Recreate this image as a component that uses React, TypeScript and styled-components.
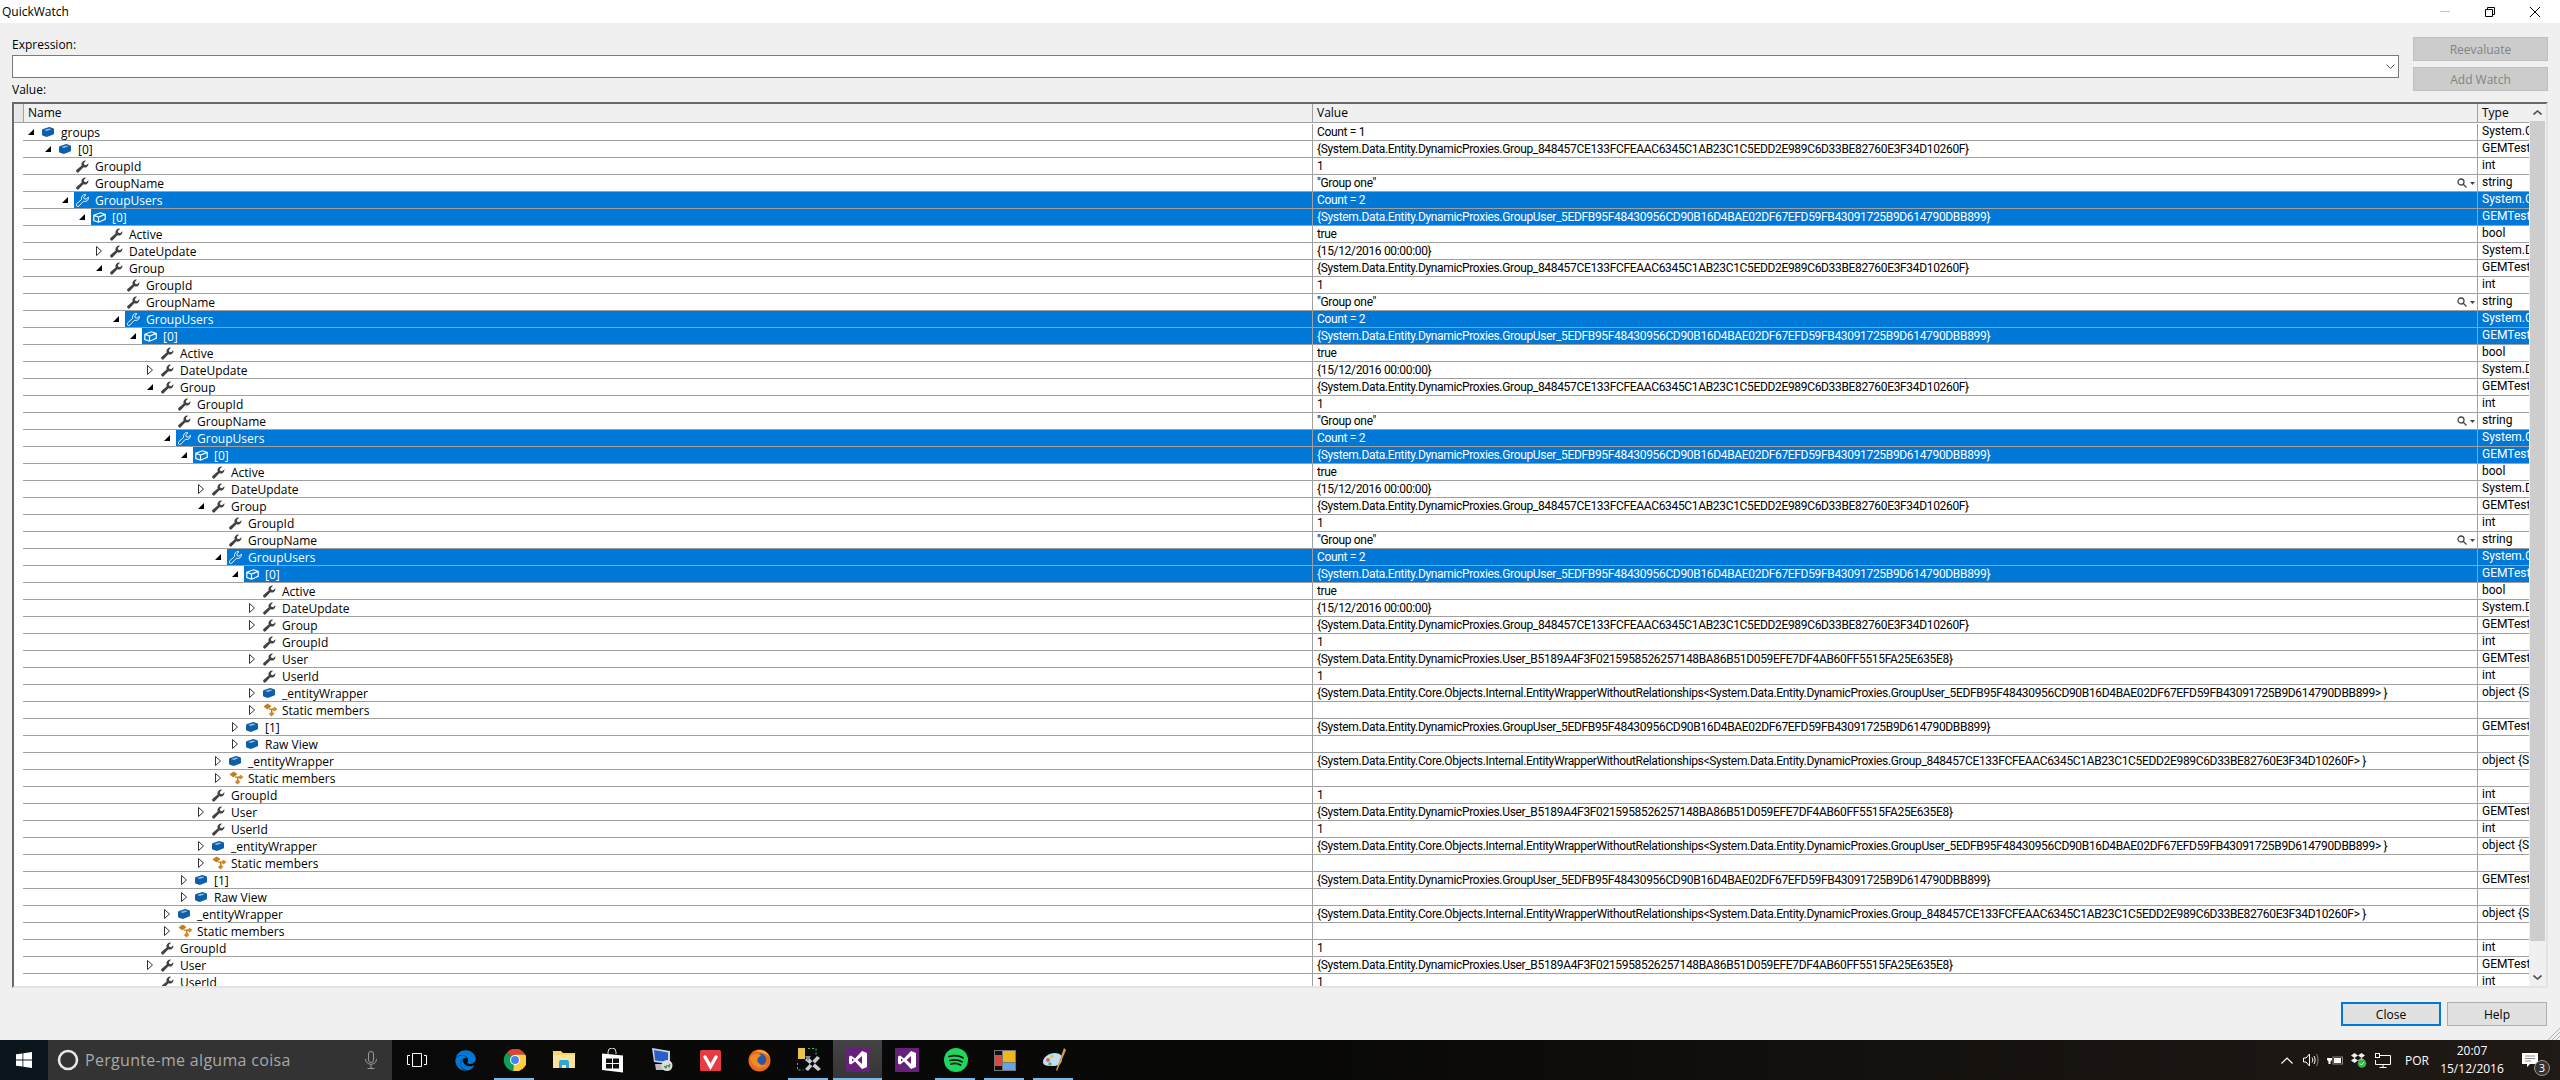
import styled, { createGlobalStyle } from 'styled-components';
import { FaEdge } from 'react-icons/fa';

const GROUP = '{System.Data.Entity.DynamicProxies.Group_848457CE133FCFEAAC6345C1AB23C1C5EDD2E989C6D33BE82760E3F34D10260F}';
const GROUP_USER = '{System.Data.Entity.DynamicProxies.GroupUser_5EDFB95F48430956CD90B16D4BAE02DF67EFD59FB43091725B9D614790DBB899}';
const USER = '{System.Data.Entity.DynamicProxies.User_B5189A4F3F0215958526257148BA86B51D059EFE7DF4AB60FF5515FA25E635E8}';
const WRAP = 'System.Data.Entity.Core.Objects.Internal.EntityWrapperWithoutRelationships<System.Data.Entity.DynamicProxies.';
const WRAP_GROUP_USER = `{${WRAP}GroupUser_5EDFB95F48430956CD90B16D4BAE02DF67EFD59FB43091725B9D614790DBB899> }`;
const WRAP_GROUP = `{${WRAP}Group_848457CE133FCFEAAC6345C1AB23C1C5EDD2E989C6D33BE82760E3F34D10260F> }`;
const DATE = '{15/12/2016 00:00:00}';
const T_COLL = 'System.Collections.Generic';
const T_MODEL = 'GEMTest.Models.Entity';
const T_DATE = 'System.DateTime';
const T_OBJ = 'object {System.Data.Entity}';

type Kind = 'prop' | 'cube' | 'static';
type Exp = 'open' | 'closed' | undefined;
type RowData = { l: number; n: string; k: Kind; e?: Exp; v?: string; t?: string; sel?: boolean; mag?: boolean };

const activeRow = (l: number): RowData => ({ l, n: 'Active', k: 'prop', v: 'true', t: 'bool' });
const dateRow = (l: number): RowData => ({ l, n: 'DateUpdate', k: 'prop', e: 'closed', v: DATE, t: T_DATE });
const groupRow = (l: number, e: Exp): RowData => ({ l, n: 'Group', k: 'prop', e, v: GROUP, t: T_MODEL });
const groupIdRow = (l: number): RowData => ({ l, n: 'GroupId', k: 'prop', v: '1', t: 'int' });
const groupNameRow = (l: number): RowData => ({ l, n: 'GroupName', k: 'prop', v: '"Group one"', t: 'string', mag: true });
const usersRow = (l: number): RowData => ({ l, n: 'GroupUsers', k: 'prop', e: 'open', v: 'Count = 2', t: T_COLL, sel: true });
const firstRow = (l: number): RowData => ({ l, n: '[0]', k: 'cube', e: 'open', v: GROUP_USER, t: T_MODEL, sel: true });
const userRow = (l: number): RowData => ({ l, n: 'User', k: 'prop', e: 'closed', v: USER, t: T_MODEL });
const userIdRow = (l: number): RowData => ({ l, n: 'UserId', k: 'prop', v: '1', t: 'int' });
const wrapRow = (l: number, v: string): RowData => ({ l, n: '_entityWrapper', k: 'cube', e: 'closed', v, t: T_OBJ });
const staticRow = (l: number): RowData => ({ l, n: 'Static members', k: 'static', e: 'closed' });
const secondRow = (l: number): RowData => ({ l, n: '[1]', k: 'cube', e: 'closed', v: GROUP_USER, t: T_MODEL });
const rawRow = (l: number): RowData => ({ l, n: 'Raw View', k: 'cube', e: 'closed' });

const rows: RowData[] = [
  { l: 0, n: 'groups', k: 'cube', e: 'open', v: 'Count = 1', t: T_COLL },
  { l: 1, n: '[0]', k: 'cube', e: 'open', v: GROUP, t: T_MODEL },
  groupIdRow(2), groupNameRow(2), usersRow(2), firstRow(3),
  activeRow(4), dateRow(4), groupRow(4, 'open'), groupIdRow(5), groupNameRow(5), usersRow(5), firstRow(6),
  activeRow(7), dateRow(7), groupRow(7, 'open'), groupIdRow(8), groupNameRow(8), usersRow(8), firstRow(9),
  activeRow(10), dateRow(10), groupRow(10, 'open'), groupIdRow(11), groupNameRow(11), usersRow(11), firstRow(12),
  activeRow(13), dateRow(13), groupRow(13, 'closed'), groupIdRow(13), userRow(13), userIdRow(13),
  wrapRow(13, WRAP_GROUP_USER), staticRow(13), secondRow(12), rawRow(12),
  wrapRow(11, WRAP_GROUP), staticRow(11),
  groupIdRow(10), userRow(10), userIdRow(10), wrapRow(10, WRAP_GROUP_USER), staticRow(10),
  secondRow(9), rawRow(9), wrapRow(8, WRAP_GROUP), staticRow(8),
  groupIdRow(7), userRow(7), userIdRow(7),
];

const WrenchIcon = ({ sel }: { sel?: boolean }) => (
  <svg width="13" height="13" viewBox="0 0 14 14">
    <path
      d="M9.6 .6a3.9 3.9 0 0 0-3.5 5.2L.7 10.6a1.6 1.6 0 0 0 2.4 2.4l4.9-5.2a3.9 3.9 0 0 0 5.3-4.4l-2.4 2.2-2-.5-.5-2 2.4-2.3a3.9 3.9 0 0 0-1.2-.2z"
      fill={sel ? '#0078d7' : '#424242'}
      stroke={sel ? '#fff' : 'none'}
      strokeWidth="1"
    />
  </svg>
);

const CubeIcon = ({ sel }: { sel?: boolean }) =>
  sel ? (
    <svg width="13" height="11" viewBox="0 0 13 11" fill="none" stroke="#fff" strokeWidth="1.2">
      <path d="M.8 3.2 7.500.8l4.700 1.600v5L5.500 10.200.8 8.600z M.8 3.2 5.500 5l6.700-2.600M5.500 5v5.200" />
    </svg>
  ) : (
    <svg width="12" height="10" viewBox="0 0 12 10">
      <path d="M0 3.200C0 2.600.4 2.300 1 2L6.500.2c.5-.2 1-.2 1.500 0l3.200 1c.5.200.8.500.8 1v4.300c0 .6-.3.900-.8 1.100L5.500 9.800c-.5.200-1 .2-1.500 0L1 8.700c-.6-.2-1-.5-1-1.100z" fill="#0e5ea8" />
      <path d="M2.200 3 7 1.500l2.600.8L4.800 4z" fill="#8fbde4" />
    </svg>
  );

const StaticIcon = () => (
  <svg width="15" height="14" viewBox="0 0 15 14" fill="#c27d1f">
    <path d="M4.500.5 8.500 3 4.500 6.500.5 3.500z" />
    <path d="M6 5.500h7v1.200H9.500V11H8V6.700H6z" />
    <path d="M11.500 3.800 14.500 6l-3 2.500L9 6.300z" fill="#d08a28" />
    <path d="M8.500 8.500 11.500 10.800 8.500 13.500 5.800 11z" fill="#d08a28" />
  </svg>
);

const GlobalStyle = createGlobalStyle`
  html, body { margin: 0; padding: 0; }
  body { font-family: "Open Sans", "Noto Sans", sans-serif; font-size: 12px; color: #000; overflow: hidden; }
  * { box-sizing: border-box; }
`;

const Screen = styled.div`
  display: flex;
  flex-direction: column;
  width: 2560px;
  height: 1080px;
`;

const TitleBar = styled.div`
  display: flex;
  align-items: center;
  justify-content: space-between;
  flex: 0 0 23px;
  padding-left: 2px;
  background: #fff;
  font-size: 12px;
`;

const WindowControls = styled.div`
  display: flex;
  align-items: center;
  gap: 35px;
  padding-right: 20px;
`;

const DialogBody = styled.div`
  position: relative;
  display: flex;
  flex-direction: column;
  flex: 1;
  padding: 14px 12px 0 12px;
  background: #f0f0f0;
`;

const TopSection = styled.div`
  display: flex;
  gap: 14px;
  height: 65px;
`;

const ExpressionColumn = styled.div`
  display: flex;
  flex-direction: column;
  flex: 1;
`;

const FieldLabel = styled.label`
  display: block;
  height: 17px;
  line-height: 15px;
`;

const ComboBox = styled.div`
  display: flex;
  align-items: center;
  justify-content: flex-end;
  height: 23px;
  margin: 1px 0 4px;
  padding-right: 3px;
  background: #fff;
  border: 1px solid #7a7a7a;
`;

const ButtonColumn = styled.div`
  display: flex;
  flex-direction: column;
  gap: 6px;
  width: 135px;
`;

const GreyButton = styled.button`
  height: 24px;
  padding: 0;
  font: inherit;
  color: #838383;
  background: #cccccc;
  border: 1px solid #bfbfbf;
`;

const Grid = styled.div`
  display: flex;
  height: 886px;
  overflow: hidden;
  background: #fff;
  border-top: 2px solid #696969;
  border-left: 2px solid #696969;
  border-right: 2px solid #e3e3e3;
  border-bottom: 2px solid #e3e3e3;
`;

const GridTable = styled.div`
  flex: 1;
  min-width: 0;
`;

const RowList = styled.div`
  padding-top: 1px;
`;

const Line = styled.div`
  display: grid;
  grid-template-columns: 1289px 1fr 52px;
  height: 17px;
  margin-left: 9px;
  border-bottom: 1px solid #a0a0a0;
  line-height: 15px;
`;

const HeadRow = styled.div`
  display: grid;
  grid-template-columns: 9px 1289px 1fr 52px;
  height: 19px;
  background: #f0f0f0;
  border-bottom: 1px solid #a0a0a0;
`;

const HeadCell = styled.div`
  padding-left: 4px;
  line-height: 18px;
  border-left: 1px solid #a0a0a0;
`;

const GutterHead = styled.div`
  margin-left: 1px;
  background: #e6e6e6;
`;

const NameCell = styled.div<{ $level: number }>`
  display: flex;
  align-items: center;
  min-width: 0;
  padding-left: ${(p) => p.$level * 17 + 2}px;
`;

const Expander = styled.span`
  display: flex;
  align-items: center;
  justify-content: center;
  flex: 0 0 12px;
  margin-right: 3px;
`;

const NameBox = styled.div<{ $sel?: boolean }>`
  display: flex;
  align-items: center;
  flex: 1;
  height: 16px;
  padding-left: 1px;
  color: ${(p) => (p.$sel ? '#fff' : '#000')};
  background: ${(p) => (p.$sel ? '#0078d7' : 'transparent')};
`;

const IconSlot = styled.span`
  display: flex;
  align-items: center;
  flex: 0 0 16px;
  margin-right: 4px;
  padding-left: 1px;
`;

const ValueCell = styled.div<{ $sel?: boolean }>`
  display: flex;
  align-items: center;
  justify-content: space-between;
  height: 16px;
  padding-left: 4px;
  overflow: hidden;
  white-space: nowrap;
  font-family: Roboto, "Open Sans", sans-serif;
  letter-spacing: -0.33px;
  color: ${(p) => (p.$sel ? '#fff' : '#000')};
  background: ${(p) => (p.$sel ? '#0078d7' : 'transparent')};
  border-left: 1px solid #a0a0a0;
`;

const TypeCell = styled(ValueCell)`
  display: block;
  line-height: 15px;
  letter-spacing: 0;
`;

const ValueTools = styled.span`
  display: flex;
  align-items: center;
  gap: 3px;
  padding-right: 2px;
`;

const Scrollbar = styled.div`
  display: flex;
  flex-direction: column;
  flex: 0 0 17px;
  background: #f0f0f0;
  border-left: 1px solid #f0f0f0;
  border-right: 1px solid #f0f0f0;
`;

const ScrollArrow = styled.div`
  display: flex;
  align-items: center;
  justify-content: center;
  flex: 0 0 17px;
  background: #f0f0f0;
`;

const ScrollThumb = styled.div`
  flex: 0 0 820px;
  background: #cdcdcd;
`;

const ScrollTrack = styled.div`
  flex: 1;
`;

const Footer = styled.div`
  display: flex;
  justify-content: flex-end;
  gap: 6px;
  padding: 14px 1px 0 0;
`;

const FooterButton = styled.button<{ $primary?: boolean }>`
  width: 100px;
  height: 24px;
  padding: 0;
  font: inherit;
  color: #000;
  background: #e1e1e1;
  border: ${(p) => (p.$primary ? '2px solid #0078d7' : '1px solid #adadad')};
`;

const ResizeGrip = styled.svg`
  position: absolute;
  right: 0;
  bottom: 0;
`;

const Taskbar = styled.div`
  display: flex;
  flex: 0 0 40px;
  color: #fff;
  background: linear-gradient(90deg, #0a0a0a 0%, #080807 50%, #15110e 75%, #201a16 100%);
`;

const StartButton = styled.div`
  display: flex;
  align-items: center;
  justify-content: center;
  flex: 0 0 48px;
  background: #0b161c;
`;

const SearchBox = styled.div`
  display: flex;
  align-items: center;
  flex: 0 0 344px;
  padding: 0 15px 0 9px;
  color: #a8a8a8;
  font-size: 16px;
  letter-spacing: 0.3px;
  background: #333333;
`;

const SearchText = styled.span`
  flex: 1;
  margin-left: 6px;
`;

const TaskButtons = styled.div`
  display: flex;
  flex: 1;
`;

const TaskButton = styled.div<{ $running?: boolean; $active?: boolean }>`
  position: relative;
  display: flex;
  align-items: center;
  justify-content: center;
  flex: 0 0 49px;
  background: ${(p) => (p.$active ? 'linear-gradient(180deg, #444 0%, #343434 100%)' : 'transparent')};

  &::after {
    content: '';
    display: ${(p) => (p.$running ? 'block' : 'none')};
    position: absolute;
    left: ${(p) => (p.$active ? '0' : '4px')};
    right: ${(p) => (p.$active ? '0' : '5px')};
    bottom: 0;
    height: 2px;
    background: #76b9ed;
  }
`;

const Tray = styled.div`
  display: flex;
  align-items: center;
  padding-right: 14px;
`;

const TrayIcon = styled.span`
  display: flex;
  align-items: center;
  justify-content: center;
  width: 24px;
`;

const Lang = styled.span`
  width: 36px;
  margin-left: 4px;
  text-align: center;
  font-size: 12px;
`;

const Clock = styled.div`
  width: 72px;
  margin-left: 1px;
  margin-right: 8px;
  text-align: center;
  font-size: 12px;
  line-height: 18px;
`;

const NotifyIcon = styled.span`
  position: relative;
  display: flex;
  width: 24px;
  margin-left: 6px;
`;

const NotifyBadge = styled.span`
  position: absolute;
  right: -4px;
  bottom: -8px;
  width: 16px;
  height: 16px;
  font-size: 11px;
  line-height: 13px;
  text-align: center;
  background: #333;
  border: 1px solid #999;
  border-radius: 50%;
`;

const VsLogo = () => (
  <svg width="24" height="24" viewBox="0 0 24 24">
    <rect width="24" height="24" fill="#68217a" />
    <path d="M3 8.500 5 7.500l4 3L16 3l5 2v14l-5 2-7-7.500-4 3-2-1zm3 2v3l2-1.500zm10-2.500-4.500 4 4.500 4z" fill="#fff" fillRule="evenodd" />
  </svg>
);

const taskIcons = [
  <svg key="tv" width="20" height="14" viewBox="0 0 20 14" fill="none" stroke="#fff" strokeWidth="1"><path d="M5.500.5h9v13h-9zM3 2.500H.5v9H3M17 2.500h2.500v9H17" /></svg>,
  <FaEdge key="edge" size={21} color="#0078d7" />,
  <svg key="chrome" width="22" height="22" viewBox="0 0 24 24">
    <path d="M12 12 3 4a12 12 0 0 1 20 2H12z" fill="#db4437" />
    <path d="M12 12 3 4a12 12 0 0 0 7 20z" fill="#0f9d58" />
    <path d="M12 6h11a12 12 0 0 1-13 18z" fill="#ffcd40" />
    <circle cx="12" cy="12" r="5.400" fill="#fff" /><circle cx="12" cy="12" r="4.300" fill="#4285f4" />
  </svg>,
  <svg key="folder" width="22" height="20" viewBox="0 0 22 20">
    <path d="M0 1h8l2 2h12v15H0z" fill="#f6d66c" /><path d="M0 5h22v13H0z" fill="#fbe39a" />
    <path d="M7 10h8l1 2v6H6v-6z" fill="#29a7e1" /><path d="M9 15h4v3H9z" fill="#fbe39a" />
  </svg>,
  <svg key="store" width="21" height="25" viewBox="0 0 21 25">
    <path d="M6 6V4a4 4 0 0 1 8 0v2" fill="none" stroke="#ddd" strokeWidth="1" />
    <path d="M0 5.500 21 7.500v17L0 22z" fill="#fff" />
    <path d="M4 10.500h6v4.500H4zM11 10.500h6v4.500h-6zM4 16h6v4.500H4zM11 16h6v4.500h-6z" fill="#111" />
  </svg>,
  <svg key="remote" width="22" height="24" viewBox="0 0 22 24">
    <path d="M1 0 19 3v13L3 14z" fill="#c9d4ea" /><path d="M3 2 17 4.500v9.500L4 12.500z" fill="#2a5fc8" />
    <path d="M4 16h12l1 6H5z" fill="#bbb" /><circle cx="16" cy="17.500" r="5.500" fill="#dcdcdc" />
    <path d="M13 18l2 2 1-3M17 17l1 2 1-3" fill="none" stroke="#3b8a3b" strokeWidth="1.200" />
  </svg>,
  <svg key="viv" width="21" height="21" viewBox="0 0 21 21">
    <rect width="21" height="21" rx="1.500" fill="#e63a45" />
    <path d="M5 7 10.500 16.500 16 7" fill="none" stroke="#fff" strokeWidth="3.400" strokeLinecap="round" />
  </svg>,
  <svg key="ff" width="23" height="23" viewBox="0 0 24 24">
    <circle cx="12" cy="12" r="11.500" fill="#e66a1f" /><circle cx="13" cy="11" r="6" fill="#28589f" />
    <path d="M2 9c2 10 12 14 20 7-4 2-10 1-12-3-1-3 1-5 4-6-3-3-8-3-12 2z" fill="#f08a23" />
    <path d="M8 2c5-2 12 0 15 7-3-4-9-6-15-7z" fill="#f5b83d" />
  </svg>,
  <svg key="tools" width="24" height="24" viewBox="0 0 24 24">
    <rect x="1" y="0" width="7" height="11" fill="#e9c34c" />
    <path d="M11 .5h8v8M.5 15v7h6" fill="none" stroke="#55c455" strokeWidth="1" strokeDasharray="2 2" />
    <path d="M8 12l13 11 3-2L11 9zM23 10 11 23l-3-2L20 8z" fill="#c9cdd2" /><path d="M8 8h6l-3 5z" fill="#7c8aa1" />
  </svg>,
  <VsLogo key="vs" />,
  <VsLogo key="vs2" />,
  <svg key="sp" width="24" height="24" viewBox="0 0 24 24">
    <circle cx="12" cy="12" r="12" fill="#1ed760" />
    <path d="M5 8.500c5-1.400 10-1 14 1.200M6 12.500c4-1 8.500-.7 12 1.200M7 16c3-.8 7-.5 9.500 1" fill="none" stroke="#111" strokeWidth="1.800" strokeLinecap="round" />
  </svg>,
  <svg key="tiles" width="22" height="21" viewBox="0 0 22 21">
    <rect width="22" height="21" fill="#777" /><rect x="9" y="1" width="12" height="11" fill="#f0b51c" /><rect x="9" y="13" width="12" height="7" fill="#63a4e8" />
    <rect x="1" y="6" width="7" height="9" fill="#d84a3f" /><rect x="1" y="1" width="7" height="4" fill="#111" /><rect x="1" y="16" width="7" height="4" fill="#111" />
  </svg>,
  <svg key="paint" width="24" height="24" viewBox="0 0 24 24">
    <path d="M1 14c0-5 6-9 12-9 5 0 8 3 7 7-1 6-7 6-11 6-5 0-8-1-8-4z" fill="#bfe0f2" />
    <path d="M22 0l2 2-9 21-1-1z" fill="#d89a4a" />
    <circle cx="6" cy="12" r="2" fill="#e06060" /><circle cx="10" cy="8.500" r="1.800" fill="#f0c040" /><circle cx="8" cy="16" r="1.800" fill="#60b060" />
  </svg>,
];

const runningFlags = [false, false, true, false, false, false, false, false, true, true, false, true, true, true];

const App = () => {
  return (
    <Screen>
      <GlobalStyle />
      <TitleBar>
        QuickWatch
        <WindowControls>
          <svg width="10" height="1"><rect width="10" height="1" fill="#c4c4c4" /></svg>
          <svg width="10" height="10" viewBox="0 0 10 10" fill="none" stroke="#000"><path d="M.5 2.500h7v7h-7zM2.500 2.500v-2h7v7h-2" /></svg>
          <svg width="10" height="10" viewBox="0 0 10 10" stroke="#000"><path d="M0 0l10 10M10 0 0 10" /></svg>
        </WindowControls>
      </TitleBar>
      <DialogBody>
        <TopSection>
          <ExpressionColumn>
            <FieldLabel>Expression:</FieldLabel>
            <ComboBox>
              <svg width="9" height="5" viewBox="0 0 9 5" fill="none" stroke="#555"><path d="M.5.500l4 4 4-4" /></svg>
            </ComboBox>
            <FieldLabel>Value:</FieldLabel>
          </ExpressionColumn>
          <ButtonColumn>
            <GreyButton>Reevaluate</GreyButton>
            <GreyButton>Add Watch</GreyButton>
          </ButtonColumn>
        </TopSection>
        <Grid>
          <GridTable>
            <HeadRow>
              <GutterHead />
              <HeadCell>Name</HeadCell>
              <HeadCell>Value</HeadCell>
              <HeadCell>Type</HeadCell>
            </HeadRow>
            <RowList>
              {rows.map((r, i) => (
                <Line key={i}>
                  <NameCell $level={r.l}>
                    <Expander>
                      {r.e === 'open' && (
                        <svg width="6" height="6" viewBox="0 0 6 6"><path d="M6 0v6H0z" fill="#000" /></svg>
                      )}
                      {r.e === 'closed' && (
                        <svg width="6" height="10" viewBox="0 0 6 10" fill="#fff" stroke="#333"><path d="M.5.500l5 4.500-5 4.500z" /></svg>
                      )}
                    </Expander>
                    <NameBox $sel={r.sel}>
                      <IconSlot>
                        {r.k === 'prop' && <WrenchIcon sel={r.sel} />}
                        {r.k === 'cube' && <CubeIcon sel={r.sel} />}
                        {r.k === 'static' && <StaticIcon />}
                      </IconSlot>
                      {r.n}
                    </NameBox>
                  </NameCell>
                  <ValueCell $sel={r.sel}>
                    {r.v}
                    {r.mag && (
                      <ValueTools>
                        <svg width="10" height="10" viewBox="0 0 10 10" fill="none" stroke="#444" strokeWidth="1.300"><circle cx="4" cy="4" r="3" /><path d="M6 6l3.500 3.500" /></svg>
                        <svg width="5" height="3" viewBox="0 0 5 3"><path d="M0 0h5L2.500 3z" fill="#444" /></svg>
                      </ValueTools>
                    )}
                  </ValueCell>
                  <TypeCell $sel={r.sel}>{r.t}</TypeCell>
                </Line>
              ))}
            </RowList>
          </GridTable>
          <Scrollbar>
            <ScrollArrow>
              <svg width="9" height="5" viewBox="0 0 9 5" fill="none" stroke="#505050" strokeWidth="1.600"><path d="M.5 4.500l4-3.500 4 3.500" /></svg>
            </ScrollArrow>
            <ScrollThumb />
            <ScrollTrack />
            <ScrollArrow>
              <svg width="9" height="5" viewBox="0 0 9 5" fill="none" stroke="#505050" strokeWidth="1.600"><path d="M.5.500l4 3.500 4-3.500" /></svg>
            </ScrollArrow>
          </Scrollbar>
        </Grid>
        <Footer>
          <FooterButton $primary>Close</FooterButton>
          <FooterButton>Help</FooterButton>
        </Footer>
        <ResizeGrip width="13" height="13" viewBox="0 0 13 13" stroke="#b0b0b0">
          <path d="M13 1 1 13M13 5l-8 8M13 9l-4 4" />
        </ResizeGrip>
      </DialogBody>
      <Taskbar>
        <StartButton>
          <svg width="16" height="16" viewBox="0 0 16 16" fill="#fff"><path d="M0 2.300 6.500 1.400v6.200H0zM7.300 1.300 16 0v7.600H7.300zM0 8.400h6.500v6.200L0 13.700zM7.300 8.400H16V16l-8.700-1.300z" /></svg>
        </StartButton>
        <SearchBox>
          <svg width="22" height="22" viewBox="0 0 22 22" fill="none" stroke="#e6e6e6" strokeWidth="2.600"><circle cx="11" cy="11" r="9" /></svg>
          <SearchText>Pergunte-me alguma coisa</SearchText>
          <svg width="12" height="18" viewBox="0 0 12 18" fill="none" stroke="#9a9a9a"><rect x="3.500" y=".5" width="5" height="11" rx="2.500" /><path d="M.5 8c0 7 11 7 11 0M6 14v3.500M2.500 17.500h7" /></svg>
        </SearchBox>
        <TaskButtons>
          {taskIcons.map((icon, i) => (
            <TaskButton key={i} $running={runningFlags[i]} $active={i === 9}>
              {icon}
            </TaskButton>
          ))}
        </TaskButtons>
        <Tray>
          <TrayIcon>
            <svg width="12" height="7" viewBox="0 0 12 7" fill="none" stroke="#fff" strokeWidth="1.200"><path d="M.5 6.500 6 1l5.500 5.500" /></svg>
          </TrayIcon>
          <TrayIcon>
            <svg width="16" height="14" viewBox="0 0 16 14" fill="none" stroke="#fff"><path d="M.5 5h2.500L6.500 1v12L3 9H.5zM9 4.500c1 1.500 1 3.500 0 5M11 3c1.500 2.500 1.500 5.500 0 8" /><path d="M13.500 1c2 3.500 2 8.500 0 12" stroke="#888" /></svg>
          </TrayIcon>
          <TrayIcon>
            <svg width="16" height="10" viewBox="0 0 16 10"><path d="M1 1v2M4 1v2M0 3h5v2l-1.500 1.500v2.500h-2V6.500L0 5z" fill="#fff" /><rect x="6" y="2" width="9.500" height="7" fill="none" stroke="#888" /><rect x="7" y="3" width="7" height="5" fill="#fff" /></svg>
          </TrayIcon>
          <TrayIcon>
            <svg width="16" height="16" viewBox="0 0 16 16">
              <path d="M3.500 1 7 3.500 3.500 6 0 3.500zM10.500 1 14 3.500 10.500 6 7 3.500zM3.500 6 7 8.500 3.500 11 0 8.500zM10.500 6 14 8.500 10.500 11 7 8.500z" fill="#eee" />
              <circle cx="11" cy="11.500" r="4.300" fill="#39b54a" /><path d="M9 11.500l1.500 1.500 2.500-3" fill="none" stroke="#fff" />
            </svg>
          </TrayIcon>
          <TrayIcon>
            <svg width="16" height="15" viewBox="0 0 16 15" fill="none" stroke="#fff"><path d="M4 2.500h11.500v9H.5V7M8 11.500V14M4.500 14.500h7" /><rect x=".5" y=".5" width="4" height="4" fill="#111" /></svg>
          </TrayIcon>
          <Lang>POR</Lang>
          <Clock>
            20:07
            <br />
            15/12/2016
          </Clock>
          <NotifyIcon>
            <svg width="16" height="15" viewBox="0 0 16 15"><path d="M0 0h16v11H8l-3 3v-3H0z" fill="#fff" /><path d="M3 3h10M3 5.500h10M3 8h6" stroke="#888" /></svg>
            <NotifyBadge>3</NotifyBadge>
          </NotifyIcon>
        </Tray>
      </Taskbar>
    </Screen>
  );
};

export default App;
